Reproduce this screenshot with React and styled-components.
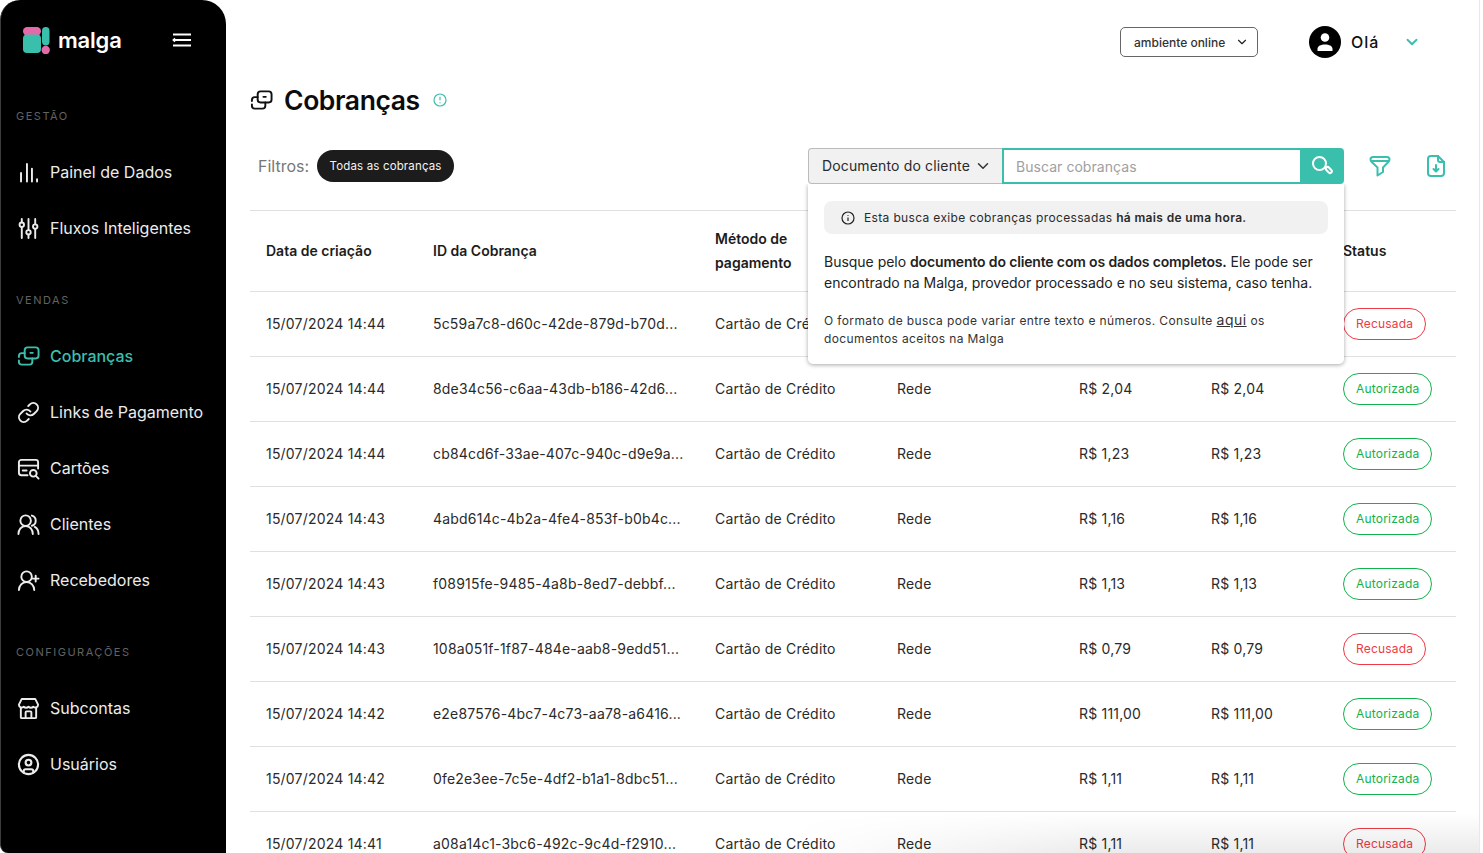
import React from 'react';
import styled, { createGlobalStyle } from 'styled-components';
import { ChevronDown, Link as LinkIcon, CircleUser } from 'lucide-react';

const TEAL = '#3abfad';

const GlobalStyle = createGlobalStyle`
  html, body {
    margin: 0;
    height: 100%;
    overflow: hidden;
    background: #fff;
  }
  body {
    font-family: Inter, "Liberation Sans", sans-serif;
    color: #1c1c1c;
  }
  * {
    box-sizing: border-box;
  }
`;

const rows = [
  ['15/07/2024 14:44', '5c59a7c8-d60c-42de-879d-b70d...', 'R$ 2,04', 'R$ 2,04', 'Recusada'],
  ['15/07/2024 14:44', '8de34c56-c6aa-43db-b186-42d6...', 'R$ 2,04', 'R$ 2,04', 'Autorizada'],
  ['15/07/2024 14:44', 'cb84cd6f-33ae-407c-940c-d9e9a...', 'R$ 1,23', 'R$ 1,23', 'Autorizada'],
  ['15/07/2024 14:43', '4abd614c-4b2a-4fe4-853f-b0b4c...', 'R$ 1,16', 'R$ 1,16', 'Autorizada'],
  ['15/07/2024 14:43', 'f08915fe-9485-4a8b-8ed7-debbf...', 'R$ 1,13', 'R$ 1,13', 'Autorizada'],
  ['15/07/2024 14:43', '108a051f-1f87-484e-aab8-9edd51...', 'R$ 0,79', 'R$ 0,79', 'Recusada'],
  ['15/07/2024 14:42', 'e2e87576-4bc7-4c73-aa78-a6416...', 'R$ 111,00', 'R$ 111,00', 'Autorizada'],
  ['15/07/2024 14:42', '0fe2e3ee-7c5e-4df2-b1a1-8dbc51...', 'R$ 1,11', 'R$ 1,11', 'Autorizada'],
  ['15/07/2024 14:41', 'a08a14c1-3bc6-492c-9c4d-f2910...', 'R$ 1,11', 'R$ 1,11', 'Recusada'],
];

const Stroke = ({ size = 24, width = 2, children }) => (
  <svg
    width={size}
    height={size}
    viewBox="0 0 24 24"
    fill="none"
    stroke="currentColor"
    strokeWidth={width}
    strokeLinecap="round"
    strokeLinejoin="round"
  >
    {children}
  </svg>
);

const BarsIcon = () => (
  <Stroke>
    <path d="M4.200 12.500v9M10.400 3v18.500M15.600 8v13.500M20.900 19v2.500" />
  </Stroke>
);

const SlidersIcon = () => (
  <Stroke>
    <path d="M5 2v3.500M5 10.500V22M12 2v11.500M12 18.500V22M19 2v5.500M19 12.500V22" />
    <circle cx="5" cy="8" r="2.300" />
    <circle cx="12" cy="16" r="2.300" />
    <circle cx="19" cy="10" r="2.300" />
  </Stroke>
);

const ChargesIcon = ({ size = 24 }) => (
  <Stroke size={size}>
    <rect x="8" y="2.500" width="14.500" height="11.500" rx="3" />
    <path d="M14 8.200h2.500" />
    <path d="M8 8.500H5a3 3 0 0 0-3 3v1M2 16v1.500a3 3 0 0 0 3 3h8a3 3 0 0 0 3-3V14" />
  </Stroke>
);

const CardSearchIcon = () => (
  <Stroke>
    <path d="M11 19H4.500A2.500 2.500 0 0 1 2 16.500v-11A2.500 2.500 0 0 1 4.500 3h15A2.500 2.500 0 0 1 22 5.500V12" />
    <path d="M2 9h20M6 14h4" />
    <circle cx="17" cy="17" r="3.500" />
    <path d="M19.700 19.700 22.500 22.500" />
  </Stroke>
);

const PeopleIcon = () => (
  <Stroke>
    <circle cx="9" cy="8" r="5.500" />
    <path d="M1.500 22c0-4.500 3-8.500 7.500-8.500s7.500 4 7.500 8.500" />
    <path d="M15.500 2.700a5.500 5.500 0 0 1 0 10.600M18.500 14.500c2.500 1.300 4 4.200 4 7.500" />
  </Stroke>
);

const PersonPlusIcon = () => (
  <Stroke>
    <circle cx="10" cy="8" r="5.500" />
    <path d="M2 22c0-4.500 3.500-8.500 8-8.500s8 4 8 8.500" />
    <path d="M19.500 7v6M16.500 10h6" />
  </Stroke>
);

const ShopIcon = () => (
  <Stroke>
    <path d="M5 2h14l3 6a3 3 0 0 1-5 2.200 3.500 3.500 0 0 1-5 0 3.500 3.500 0 0 1-5 0A3 3 0 0 1 2 8z" />
    <path d="M4 11.500V21a1 1 0 0 0 1 1h14a1 1 0 0 0 1-1v-9.500" />
    <path d="M9 22v-6a1 1 0 0 1 1-1h4a1 1 0 0 1 1 1v6" />
  </Stroke>
);

const navGroups = [
  {
    title: 'GESTÃO',
    items: [
      { label: 'Painel de Dados', icon: <BarsIcon /> },
      { label: 'Fluxos Inteligentes', icon: <SlidersIcon /> },
    ],
  },
  {
    title: 'VENDAS',
    items: [
      { label: 'Cobranças', icon: <ChargesIcon />, active: true },
      { label: 'Links de Pagamento', icon: <LinkIcon size={24} strokeWidth={2} /> },
      { label: 'Cartões', icon: <CardSearchIcon /> },
      { label: 'Clientes', icon: <PeopleIcon /> },
      { label: 'Recebedores', icon: <PersonPlusIcon /> },
    ],
  },
  {
    title: 'CONFIGURAÇÕES',
    items: [
      { label: 'Subcontas', icon: <ShopIcon /> },
      { label: 'Usuários', icon: <CircleUser size={24} strokeWidth={2.200} /> },
    ],
  },
];

const App = () => {
  return (
    <Page>
      <GlobalStyle />
      <Sidebar>
        <LogoRow>
          <LogoMark>
            <svg width="27" height="27" viewBox="0 0 27 27">
              <rect x="0" y="0" width="18" height="8.500" rx="4.200" fill="#e56aa9" />
              <rect x="0" y="7.500" width="18" height="18.500" rx="4" fill="#3abfad" />
              <rect x="19" y="0" width="7.500" height="18.500" rx="3.700" fill="#3abfad" />
              <circle cx="22.700" cy="23" r="4.200" fill="#e56aa9" />
            </svg>
            <LogoText>malga</LogoText>
          </LogoMark>
          <MenuToggle>
            <svg width="20" height="14" viewBox="0 0 20 14" fill="none" stroke="#fff" strokeWidth="1.800">
              <path d="M1 1.500h18M1 7h18M1 12.500h18" />
              <path d="M3 5.200 1 7l2 1.800" strokeWidth="1.200" />
            </svg>
          </MenuToggle>
        </LogoRow>
        <NavList>
          {navGroups.map((group) => (
            <NavGroup key={group.title}>
              <NavTitle>{group.title}</NavTitle>
              {group.items.map((item) => (
                <NavItem key={item.label} $active={item.active}>
                  <NavIcon>{item.icon}</NavIcon>
                  {item.label}
                </NavItem>
              ))}
            </NavGroup>
          ))}
        </NavList>
      </Sidebar>

      <Main>
        <TopBar>
          <EnvSelect>
            ambiente online
            <ChevronDown size={14} strokeWidth={2} color="#222" />
          </EnvSelect>
          <Avatar>
            <svg width="20" height="20" viewBox="0 0 20 20" fill="#fff">
              <circle cx="10" cy="5.500" r="4.300" />
              <path d="M2.500 19v-2.200c0-2.900 3.400-4.400 7.500-4.400s7.500 1.500 7.500 4.400V19z" />
            </svg>
          </Avatar>
          <Hello>Olá</Hello>
          <UserCaret>
            <ChevronDown size={18} strokeWidth={2.500} color={TEAL} />
          </UserCaret>
        </TopBar>

        <TitleRow>
          <ChargesIcon size={23} />
          <Title>Cobranças</Title>
          <InfoMark>
            <svg width="14" height="14" viewBox="0 0 14 14" fill="none" stroke={TEAL} strokeWidth="1.200">
              <circle cx="7" cy="7" r="6" />
              <path d="M7 3.800v3.400M7 9.200v1" />
            </svg>
          </InfoMark>
        </TitleRow>

        <FilterRow>
          <FilterLabel>Filtros:</FilterLabel>
          <FilterPill>Todas as cobranças</FilterPill>
          <SearchArea>
            <SearchType>
              Documento do cliente
              <ChevronDown size={18} strokeWidth={2} color="#333" />
            </SearchType>
            <SearchInput placeholder="Buscar cobranças" />
            <SearchButton>
              <svg width="22" height="22" viewBox="0 0 22 22" fill="none" stroke="#fff" strokeWidth="2">
                <circle cx="8.500" cy="8.500" r="6.500" />
                <rect x="14.300" y="13.200" width="7" height="3.600" rx="1.800" transform="rotate(45 17.800 15)" />
              </svg>
            </SearchButton>
            <Popover>
              <Notice>
                <svg width="14" height="14" viewBox="0 0 14 14" fill="none" stroke="#222" strokeWidth="1.200">
                  <circle cx="7" cy="7" r="6" />
                  <path d="M7 6.500v3.500M7 4v.8" />
                </svg>
                <span>
                  Esta busca exibe cobranças processadas <b>há mais de uma hora.</b>
                </span>
              </Notice>
              <PopoverText>
                Busque pelo <b>documento do cliente com os dados completos.</b> Ele pode ser
                encontrado na Malga, provedor processado e no seu sistema, caso tenha.
              </PopoverText>
              <PopoverNote>
                O formato de busca pode variar entre texto e números. Consulte <HelpLink>aqui</HelpLink> os
                documentos aceitos na Malga
              </PopoverNote>
            </Popover>
          </SearchArea>
          <ToolButton>
            <svg width="24" height="24" viewBox="0 0 24 24" fill="none" stroke={TEAL} strokeWidth="2" strokeLinejoin="round">
              <path d="M2.500 5.500c0-1.500 1-2.500 2.500-2.500h14c1.500 0 2.500 1 2.500 2.500 0 1-.5 1.800-1.200 2.500L15 13.500V18l-5.500 3.500v-8L3.700 8c-.7-.7-1.200-1.500-1.200-2.500z" />
              <path d="M3 7h18" />
            </svg>
          </ToolButton>
          <ToolButton>
            <svg width="24" height="24" viewBox="0 0 24 24" fill="none" stroke={TEAL} strokeWidth="2" strokeLinecap="round" strokeLinejoin="round">
              <path d="M14 2H7a3 3 0 0 0-3 3v14a3 3 0 0 0 3 3h10a3 3 0 0 0 3-3V8z" />
              <path d="M14 2v4a2 2 0 0 0 2 2h4" />
              <path d="M12 11v6M9.500 15l2.500 2.500 2.500-2.500" />
            </svg>
          </ToolButton>
        </FilterRow>

        <Table>
          <colgroup>
            <col style={{ width: 167 }} />
            <col style={{ width: 282 }} />
            <col style={{ width: 182 }} />
            <col style={{ width: 182 }} />
            <col style={{ width: 132 }} />
            <col style={{ width: 132 }} />
            <col />
          </colgroup>
          <thead>
            <tr>
              <HeadCell>Data de criação</HeadCell>
              <HeadCell>ID da Cobrança</HeadCell>
              <HeadCell>Método de pagamento</HeadCell>
              <HeadCell>Provedor</HeadCell>
              <HeadCell>Valor</HeadCell>
              <HeadCell>Valor pago</HeadCell>
              <HeadCell>Status</HeadCell>
            </tr>
          </thead>
          <tbody>
            {rows.map((row) => (
              <tr key={row[1]}>
                <Cell>{row[0]}</Cell>
                <IdCell>{row[1]}</IdCell>
                <Cell>Cartão de Crédito</Cell>
                <Cell>Rede</Cell>
                <AmountCell>{row[2]}</AmountCell>
                <AmountCell>{row[3]}</AmountCell>
                <StatusCell>
                  <Badge $refused={row[4] === 'Recusada'}>{row[4]}</Badge>
                </StatusCell>
              </tr>
            ))}
          </tbody>
        </Table>
        <BottomFade />
      </Main>
      <ScrollEdge />
    </Page>
  );
};

const Page = styled.div`
  display: flex;
  width: 100%;
  height: 853px;
  overflow: hidden;
`;

const Sidebar = styled.aside`
  flex: 0 0 226px;
  height: 853px;
  background: #000;
  border-left: 1px solid #3c3c3c;
  border-radius: 20px 24px 0 8px;
  color: #ececec;
  overflow: hidden;
`;

const LogoRow = styled.div`
  display: flex;
  align-items: center;
  justify-content: space-between;
  height: 108px;
  padding: 0 34px 28px 22px;
`;

const LogoMark = styled.div`
  display: flex;
  align-items: center;
  gap: 8px;
`;

const LogoText = styled.span`
  color: #fff;
  font-size: 22px;
  font-weight: 600;
  letter-spacing: -0.2px;
`;

const MenuToggle = styled.div`
  display: flex;
`;

const NavList = styled.nav`
  display: flex;
  flex-direction: column;
  gap: 36px;
`;

const NavGroup = styled.div`
  display: flex;
  flex-direction: column;
`;

const NavTitle = styled.div`
  height: 16px;
  margin-bottom: 20px;
  padding-left: 15px;
  color: #626262;
  font-size: 11px;
  line-height: 16px;
  letter-spacing: 1.500px;
`;

const NavItem = styled.a`
  display: flex;
  align-items: center;
  gap: 10px;
  height: 56px;
  padding-left: 16px;
  color: ${(p) => (p.$active ? TEAL : '#ececec')};
  font-size: 16px;
  font-weight: ${(p) => (p.$active ? 500 : 400)};
`;

const NavIcon = styled.span`
  display: flex;
  width: 23px;
  svg {
    width: 23px;
    height: 23px;
  }
`;

const Main = styled.main`
  position: relative;
  flex: 1;
  min-width: 0;
  padding: 0 3px 0 24px;
`;

const TopBar = styled.div`
  display: flex;
  align-items: center;
  height: 84px;
  padding-right: 59px;
  justify-content: flex-end;
`;

const EnvSelect = styled.div`
  display: flex;
  align-items: center;
  justify-content: space-between;
  width: 138px;
  height: 30px;
  margin-right: 51px;
  padding: 0 8px 0 13px;
  border: 1px solid #666;
  border-radius: 5px;
  color: #333;
  font-size: 12px;
  font-weight: 500;
`;

const Avatar = styled.div`
  display: flex;
  align-items: center;
  justify-content: center;
  width: 32px;
  height: 32px;
  margin-right: 10px;
  border-radius: 50%;
  background: #000;
  overflow: hidden;
`;

const Hello = styled.span`
  width: 52px;
  color: #111;
  font-size: 16px;
  font-weight: 500;
  letter-spacing: 1px;
`;

const UserCaret = styled.span`
  display: flex;
`;

const TitleRow = styled.div`
  display: flex;
  align-items: center;
  height: 32px;
  color: #111;
`;

const Title = styled.h1`
  margin: 0 13px 0 11px;
  color: #0c0c0c;
  font-size: 26.500px;
  font-weight: 600;
  letter-spacing: -0.4px;
`;

const InfoMark = styled.span`
  display: flex;
`;

const FilterRow = styled.div`
  display: flex;
  align-items: center;
  height: 95px;
  margin-right: 24px;
  padding: 6px 8px 0;
  border-bottom: 1px solid #e0e0e0;
`;

const FilterLabel = styled.span`
  margin-right: 8px;
  color: #777;
  font-size: 16px;
`;

const FilterPill = styled.span`
  display: flex;
  align-items: center;
  height: 32px;
  padding: 0 12.500px;
  border-radius: 16px;
  background: #1c1c1c;
  color: #f4f4f4;
  font-size: 11.500px;
  letter-spacing: 0.15px;
`;

const SearchArea = styled.div`
  position: relative;
  display: flex;
  height: 36px;
  margin-left: auto;
`;

const SearchType = styled.div`
  display: flex;
  align-items: center;
  gap: 4px;
  width: 194px;
  padding: 0 0 1px 13px;
  border: 1px solid #bbb;
  border-right: none;
  border-radius: 4px 0 0 4px;
  background: #f1f1f1;
  color: #2a2a2a;
  font-size: 14px;
  letter-spacing: 0.15px;
`;

const SearchInput = styled.input`
  width: 298px;
  padding: 0 12px;
  border: 2px solid ${TEAL};
  border-right: none;
  outline: none;
  font-family: inherit;
  font-size: 14px;
  letter-spacing: 0.05px;
  &::placeholder {
    color: #a0a0a0;
  }
`;

const SearchButton = styled.div`
  display: flex;
  align-items: center;
  justify-content: center;
  width: 44px;
  border-radius: 0 4px 4px 0;
  background: ${TEAL};
`;

const Popover = styled.div`
  position: absolute;
  z-index: 2;
  top: 36px;
  left: 0;
  right: 0;
  height: 180px;
  padding: 17px 16px 0;
  border-radius: 0 0 5px 5px;
  background: #fff;
  box-shadow: 0 1px 4px rgba(0, 0, 0, 0.35);
  clip-path: inset(0 -8px -8px -8px);
`;

const Notice = styled.div`
  display: flex;
  align-items: center;
  gap: 9px;
  height: 33px;
  padding-left: 17px;
  border-radius: 8px;
  background: #f1f1f1;
  color: #2a2a2a;
  font-size: 12px;
  letter-spacing: 0.35px;
  b {
    font-weight: 600;
  }
`;

const PopoverText = styled.p`
  margin: 17px 0 0;
  color: #222;
  font-size: 14px;
  line-height: 21px;
  letter-spacing: -0.02px;
  b {
    font-weight: 600;
    letter-spacing: -0.15px;
  }
`;

const PopoverNote = styled.p`
  margin: 18px 0 0;
  color: #333;
  font-size: 12px;
  line-height: 18px;
  letter-spacing: 0.38px;
`;

const HelpLink = styled.a`
  font-size: 14px;
  letter-spacing: 0.5px;
  text-decoration: underline;
`;

const ToolButton = styled.div`
  display: flex;
  margin-left: 24px;
  color: ${TEAL};
  &:last-child {
    margin-left: 32px;
    margin-right: 0;
  }
`;

const Table = styled.table`
  width: 1206px;
  table-layout: fixed;
  border-collapse: collapse;
`;

const HeadCell = styled.th`
  height: 80px;
  padding: 0 16px;
  border-bottom: 1px solid #e0e0e0;
  color: #1c1c1c;
  font-size: 14px;
  font-weight: 600;
  line-height: 24px;
  text-align: left;
`;

const Cell = styled.td`
  height: 65px;
  padding: 0 16px;
  border-bottom: 1px solid #e0e0e0;
  color: #2a2a2a;
  font-size: 14px;
  letter-spacing: 0.2px;
  white-space: nowrap;
  overflow: hidden;
`;

const IdCell = styled(Cell)`
  letter-spacing: 0.18px;
`;

const AmountCell = styled(Cell)`
  letter-spacing: 0.2px;
`;

const StatusCell = styled(Cell)`
  overflow: visible;
`;

const Badge = styled.span`
  display: inline-flex;
  align-items: center;
  height: 32px;
  padding: 0 12px;
  border: 1px solid ${(p) => (p.$refused ? '#ee3a46' : '#12b24c')};
  border-radius: 16px;
  color: ${(p) => (p.$refused ? '#ee3a46' : '#12b24c')};
  font-size: 12px;
  letter-spacing: 0.2px;
`;

const BottomFade = styled.div`
  position: absolute;
  z-index: 3;
  left: 560px;
  right: 0;
  bottom: 0;
  height: 40px;
  background: linear-gradient(to bottom, rgba(0, 0, 0, 0), rgba(0, 0, 0, 0.08));
  mask-image: linear-gradient(to right, transparent, #000 45%);
  pointer-events: none;
`;

const ScrollEdge = styled.div`
  position: absolute;
  z-index: 4;
  top: 0;
  left: 1479px;
  width: 4px;
  height: 853px;
  border-left: 1px solid #e8e8e8;
  background: #fff;
`;

export default App;
